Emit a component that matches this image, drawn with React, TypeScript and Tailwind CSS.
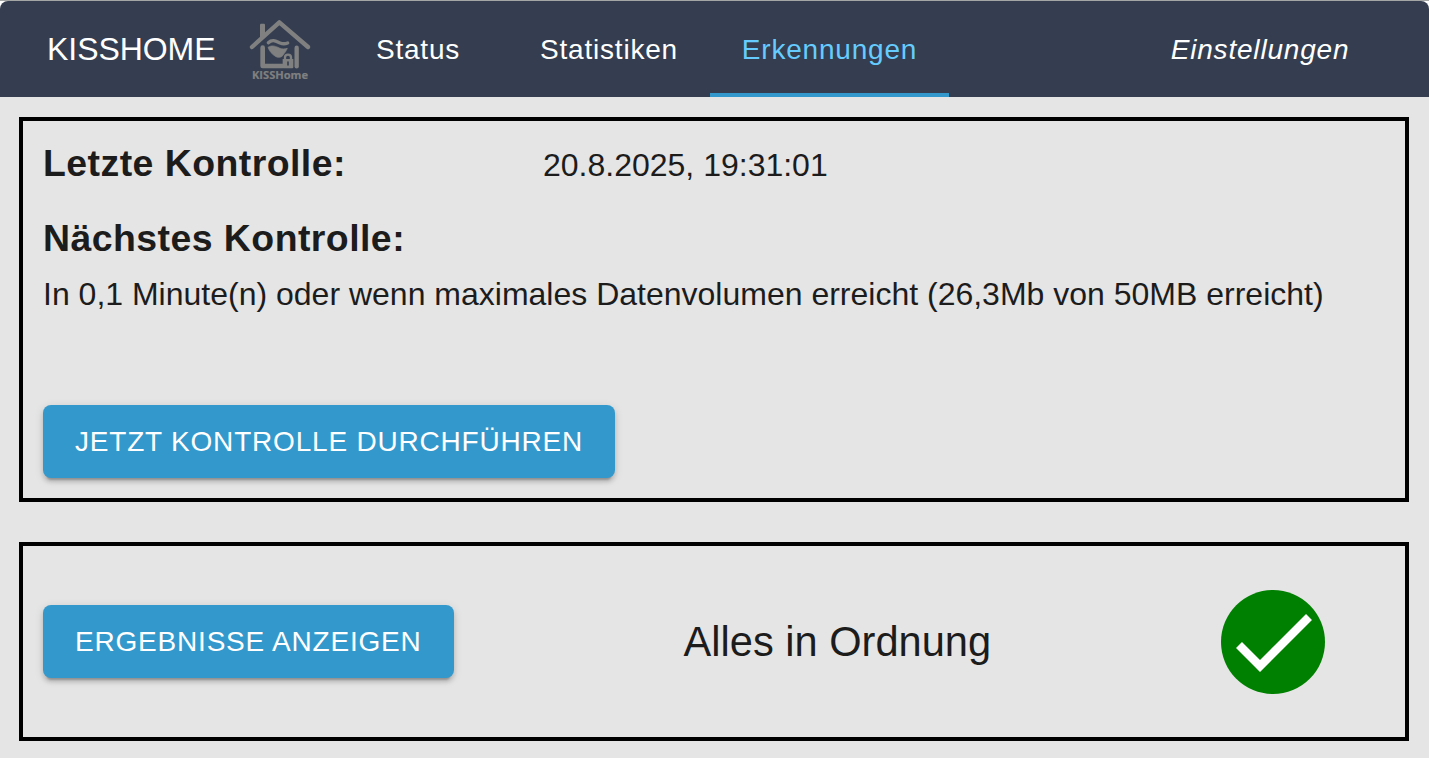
import React from "react";

function Logo() {
  return (
    <svg className="h-16 w-16 shrink-0" viewBox="54 33 192 192" fill="none" stroke="#808080">
      <path d="M66 123 L148 49 L234 123" strokeWidth="13" strokeLinecap="round" strokeLinejoin="round" />
      <path d="M90 102 V56 Q90 53 93 53 H102 Q105 53 105 56 V88 Z" fill="#808080" stroke="none" />
      <path d="M98 125 V180 H158" strokeWidth="14" strokeLinecap="round" strokeLinejoin="round" />
      <path d="M200 125 V181" strokeWidth="13" strokeLinecap="round" />
      <path d="M115 110 C128 98 140 107 150 111 C160 115 168 113 173 111" strokeWidth="10" strokeLinecap="round" />
      <path d="M114 124 C126 116 138 121 148 126 C156 130 164 129 172 127 C168 137 164 140 160 146 C156 154 146 156 138 152 C126 145 118 136 114 124 Z" fill="#808080" stroke="#808080" strokeWidth="2" strokeLinejoin="round" />
      <path d="M165 162 V154 Q165 146 174 146 Q183 146 183 154 V162" strokeWidth="7" />
      <path d="M158 159 H190 V184 Q190 187 187 187 H161 Q158 187 158 184 Z" fill="#808080" stroke="none" />
      <path d="M174 168 V177" stroke="#343e50" strokeWidth="5" strokeLinecap="round" />
      <text
        x="66"
        y="220"
        textLength="168"
        lengthAdjust="spacingAndGlyphs"
        fill="#808080"
        stroke="#808080"
        strokeWidth="0.6"
        className="font-['Open_Sans',sans-serif] text-[34px] font-bold"
      >
        KISSHome
      </text>
    </svg>
  );
}

function Panel({ className, children }: { className: string; children: React.ReactNode }) {
  return <section className={`border-4 border-black ${className}`}>{children}</section>;
}

function ActionButton({ children }: { children: React.ReactNode }) {
  return (
    <button className="h-[73px] shrink-0 rounded-lg bg-[#3399cc] px-8 text-[28px] leading-[49px] tracking-[0.8px] whitespace-nowrap text-white uppercase shadow-[0_6px_2px_-4px_rgba(0,0,0,0.2),0_4px_4px_0_rgba(0,0,0,0.14),0_2px_10px_0_rgba(0,0,0,0.12)]">
      {children}
    </button>
  );
}

const tab = "flex h-full shrink-0 items-center justify-center border-b-4 pt-1.5 text-[28px] tracking-[0.8px]";

export default function App() {
  return (
    <div className="h-[758px] w-full overflow-hidden bg-[#e5e5e5] font-['Liberation_Sans',Arial,sans-serif] text-[#1c1c1c]">
      <div className="border-t border-[#a3a6a5] bg-white">
        <header className="flex h-24 rounded-t-lg bg-[#343e50] pl-[47px] text-white">
          <div className="flex w-[281px] shrink-0 items-center pb-px">
            <span className="w-[201px] text-[32px] tracking-[-0.05px]">KISSHOME</span>
            <Logo />
          </div>
          <nav className="flex flex-1">
            <a className={`${tab} w-[180px] border-transparent`}>Status</a>
            <a className={`${tab} w-[202px] border-transparent`}>Statistiken</a>
            <a className={`${tab} w-[239px] border-[#3399cc] text-[#66ccff]`}>Erkennungen</a>
            <a className={`${tab} mr-12 ml-auto w-[242px] border-transparent italic`}>Einstellungen</a>
          </nav>
        </header>
      </div>

      <main className="flex flex-col gap-10 pt-5 pr-5 pl-[19px]">
        <Panel className="h-[385px] px-5 pt-[19px]">
          <div className="flex h-[46px] items-center">
            <h2 className="w-[500px] text-[37.44px] font-bold tracking-[0.45px]">Letzte Kontrolle:</h2>
            <span className="pt-1 text-[32px]">20.8.2025, 19:31:01</span>
          </div>
          <h2 className="mt-7 text-[37.44px] leading-[48px] font-bold tracking-[0.45px]">Nächstes Kontrolle:</h2>
          <p className="mt-2 mb-[87px] text-[32px] leading-[48px] whitespace-nowrap">
            In 0,1 Minute(n) oder wenn maximales Datenvolumen erreicht (26,3Mb von 50MB erreicht)
          </p>
          <ActionButton>Jetzt Kontrolle durchführen</ActionButton>
        </Panel>

        <Panel className="flex h-[199px] items-center justify-between pr-20 pl-5">
          <ActionButton>Ergebnisse anzeigen</ActionButton>
          <span className="pt-0.5 text-[41.6px]">Alles in Ordnung</span>
          <span className="flex h-[104px] w-[104px] items-center justify-center rounded-full bg-[#008000]">
            <svg className="h-[104px] w-[104px]" viewBox="0 0 104 104" fill="none">
              <path d="M18 55 L39 76 L88 27" stroke="#fff" strokeWidth="8.4" />
            </svg>
          </span>
        </Panel>
      </main>
    </div>
  );
}
